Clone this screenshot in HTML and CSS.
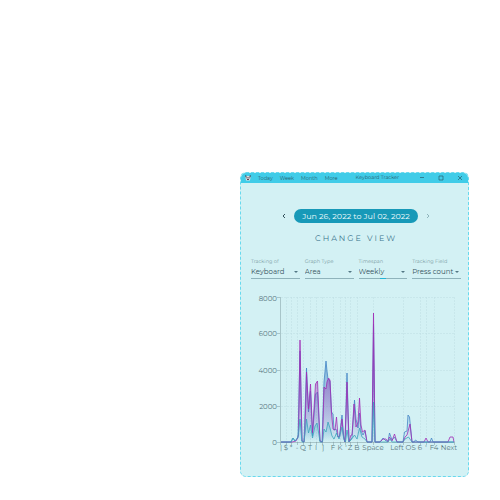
FILE: index.html
```html
<!DOCTYPE html>
<html lang="en">

<head>
    <meta charset="UTF-8">
    <meta name="viewport" content="width=device-width, initial-scale=1.0">
    <title>Keyboard Tracker</title>
    <link rel="stylesheet" href="styles.css">
</head>

<body>
    <div class="window">
        <header class="titlebar">
            <svg class="app-icon" viewBox="0 0 12 12" aria-hidden="true">
                <path d="M1 1l3 1h4l3-1v4l-1 6H2L1 5z" fill="#d9dde2" />
                <path d="M0 0l4 2-3 3zM12 0L8 2l3 3z" fill="#35586b" />
                <path d="M3 4h2v3H3zM7 4h2v3H7zM4 8h4v2H4z" fill="#5a4653" />
            </svg>
            <nav class="menu">
                <button type="button">Today</button>
                <button type="button">Week</button>
                <button type="button">Month</button>
                <button type="button">More</button>
            </nav>
            <span class="title">Keyboard Tracker</span>
            <div class="window-buttons">
                <button type="button" aria-label="Minimize"><svg viewBox="0 0 6 6"><path d="M1 2.500h4" /></svg></button>
                <button type="button" aria-label="Maximize"><svg viewBox="0 0 6 6"><path d="M1 1h4v4H1z" /></svg></button>
                <button type="button" aria-label="Close"><svg viewBox="0 0 6 6"><path d="M1 1l4 4M5 1L1 5" /></svg></button>
            </div>
        </header>

        <main>
            <div class="date-nav">
                <button type="button" class="arrow" aria-label="Previous"><svg viewBox="0 0 6 6"><path d="M4 1L2 3l2 2" /></svg></button>
                <button type="button" class="date-range">Jun 26, 2022 to Jul 02, 2022</button>
                <button type="button" class="arrow next" aria-label="Next"><svg viewBox="0 0 6 6"><path d="M2 1l2 2-2 2" /></svg></button>
            </div>

            <h1>CHANGE VIEW</h1>

            <form class="filters">
                <div class="field">
                    <label for="tracking">Tracking of</label>
                    <select id="tracking"><option>Keyboard</option></select>
                </div>
                <div class="field">
                    <label for="graph">Graph Type</label>
                    <select id="graph"><option>Area</option></select>
                </div>
                <div class="field active">
                    <label for="timespan">Timespan</label>
                    <select id="timespan"><option>Weekly</option></select>
                </div>
                <div class="field">
                    <label for="tracked">Tracking Field</label>
                    <select id="tracked"><option>Press count</option></select>
                </div>
            </form>

            <svg class="chart" viewBox="0 0 210 166" role="img" aria-label="Press count by key">
                <defs>
                    <linearGradient id="blue" x1="0" y1="0" x2="0" y2="1">
                        <stop offset="0" stop-color="#3f7fc4" stop-opacity=".8" />
                        <stop offset="1" stop-color="#3f7fc4" stop-opacity="0" />
                    </linearGradient>
                    <linearGradient id="purple" x1="0" y1="0" x2="0" y2="1">
                        <stop offset="0" stop-color="#9c27b0" stop-opacity=".8" />
                        <stop offset="1" stop-color="#9c27b0" stop-opacity="0" />
                    </linearGradient>
                    <linearGradient id="teal" x1="0" y1="0" x2="0" y2="1">
                        <stop offset="0" stop-color="#28b0c4" stop-opacity=".6" />
                        <stop offset="1" stop-color="#28b0c4" stop-opacity="0" />
                    </linearGradient>
                </defs>

                <path class="grid" d="M30 7.500H203M30 43.500H203M30 80.500H203M30 116.500H203" />
                <path class="grid" d="M35.500 7V152M40.500 7V152M46.500 7V152M52.500 7V152M59.500 7V152M65.500 7V152M71.500 7V152M82.500 7V152M89.500 7V152M94.500 7V152M99.500 7V152M106.500 7V152M122.500 7V152M152.500 7V152M169.500 7V152M175.500 7V152M183.500 7V152M203.500 7V152" />

                <path class="axis" d="M29.500 7V152.500H203.500M26 7.500h3M26 43.500h3M26 80.500h3M26 116.500h3M26 152.500h3" />
                <path class="axis" d="M29.500 152v3M35.500 152v3M40.500 152v3M46.500 152v3M52.500 152v3M59.500 152v3M65.500 152v3M71.500 152v3M82.500 152v3M89.500 152v3M94.500 152v3M99.500 152v3M106.500 152v3M122.500 152v3M152.500 152v3M169.500 152v3M175.500 152v3M183.500 152v3M203.500 152v3" />

                <path class="blue" d="M30 152L40 152L42 148L44 151L47 148L49 61L51 151L53 152L55.500 78L57.500 122L59.500 101L61.500 146L64.500 104L66.500 102L69 151L71 152L73 92L75 71L76 81L77 89L79 91L80.500 122L82 124L83 140L85 139L87 147L88.500 146L91 125L92.500 145L94 152L96 83L98 152L100 149L101 148L103.500 110L105 129L107 138L108.500 123L110 141L112 145L114 141L116 152L121 152L122.500 34L124 152L129 152L132 148L135 151L137 151L138.500 143L141 150L143.500 147L146 152L152 152L153.500 142L156 141L157 125L158.500 127L161 152L163 152L164.500 150L167 152L179 152L180.500 148L182 152L203 152" />
                <path class="purple" d="M30 152L41 152L45 151L46 149L47.500 145L49 50L51 151L53 152L54 140L55.500 82L57.500 119L59.500 94L61.500 143L64.500 94L66.500 91L69 151L71.500 152L73 97L75 99L76 92L77.500 88L79 90L80.500 123L82 139L84 140L85.500 127L87 147L88.500 147L91 129L92.500 147L94 152L96 92L98 152L100 145L101 145L103 114L105 137L107 132L108.500 108L110 135L111.500 142L114 140L116 152L121 152L122.500 23L124 152L129 152L132 149L135 149L137 152L138.500 147L141 151L143.500 144L146 152L152 152L154 147L156 145L159 134L161 152L173 152L175 148L177 152L197 152L199 147L202 147L203 152" />
                <path class="teal" d="M30 152L40 152L42 148L44 151L47 147L49 129L51 152L53 152L55.500 129L57.500 143L59.500 135L61.500 148L64 136L66 133L68 145L69 152L71.500 152L73 139L75 142L77 132L79 138L81 146L83 149L85.500 143L88 149L91 137L93 150L94.500 152L96 140L98 152L100 150L103.500 145L106 149L108.500 138L111 147L114 149L116 152L121 152L122.500 112L124 152L137 152L139 149L141 152L152 152L154 149L157.500 147L161 152L203 152" />

                <g class="y-labels">
                    <text x="26" y="11">8000</text>
                    <text x="26" y="46">6000</text>
                    <text x="26" y="83">4000</text>
                    <text x="26" y="119">2000</text>
                    <text x="26" y="155">0</text>
                </g>
                <g class="x-labels">
                    <text x="30" y="160">|</text>
                    <text x="35" y="160">$</text>
                    <text x="40" y="160">*</text>
                    <text x="46" y="160">-</text>
                    <text x="52" y="160">Q</text>
                    <text x="59" y="160">T</text>
                    <text x="65" y="160">I</text>
                    <text x="72" y="160">]</text>
                    <text x="82" y="160">F</text>
                    <text x="89" y="160">K</text>
                    <text x="95" y="160">'</text>
                    <text x="99" y="160">Z</text>
                    <text x="106" y="160">B</text>
                    <text x="122" y="160">Space</text>
                    <text x="152" y="160">Left OS</text>
                    <text x="169" y="160">6</text>
                    <text x="175" y="160">'</text>
                    <text x="183" y="160">F4</text>
                    <text x="198" y="160">Next</text>
                </g>
            </svg>
        </main>
    </div>
</body>

</html>
```
FILE: styles.css
```css
* {
    box-sizing: border-box;
}

body {
    margin: 0;
    padding: 172px 31px 22px 48%;
    background-color: #fff;
    font-family: "Montserrat", "Inter", sans-serif;
    color: #34525c;
    text-rendering: geometricPrecision;
}

button {
    padding: 0;
    border: none;
    background: none;
    font-family: inherit;
    color: inherit;
    cursor: pointer;
}

button svg {
    display: block;
    width: 6px;
    height: 6px;
    fill: none;
    stroke: currentColor;
    stroke-width: 1;
}

.window {
    border: 1px dashed #68d9ee;
    border-radius: 6px;
    background-color: #d3f1f4;
    overflow: hidden;
}

.titlebar {
    display: flex;
    align-items: center;
    height: 10px;
    padding: 0 5px 0 4px;
    background-color: #40cce8;
    color: #285f70;
    font-size: 5px;
}

.app-icon {
    width: 6px;
    height: 6px;
    margin-right: 7px;
}

.menu {
    display: flex;
    gap: 7px;
}

.menu button {
    font-size: 5px;
    line-height: 10px;
}

.title {
    margin-left: 18px;
}

.window-buttons {
    display: flex;
    gap: 13px;
    margin-left: auto;
}

.window-buttons svg {
    stroke-width: 0.7px;
}

main {
    padding: 26px 7px 20px 10px;
}

.date-nav {
    display: flex;
    align-items: center;
    justify-content: center;
    gap: 7px;
}

.date-range {
    height: 14px;
    padding: 0 8px;
    border-radius: 7px;
    background-color: #1799b8;
    color: #f0fcfd;
    font-size: 8px;
    line-height: 14px;
    white-space: nowrap;
}

.next {
    color: #8fb5bc;
}

h1 {
    margin: 10px 0 14px;
    color: #3b758e;
    font-size: 8px;
    font-weight: 400;
    line-height: 12px;
    letter-spacing: 2px;
    text-align: center;
}

.filters {
    display: grid;
    grid-template-columns: repeat(4, 1fr);
    gap: 5px;
}

.field {
    position: relative;
    min-width: 0;
    border-bottom: 1px solid #8fb3bb;
}

.field label {
    display: block;
    color: #7c9da5;
    font-size: 5px;
    line-height: 7px;
    white-space: nowrap;
}

.field select {
    display: block;
    width: 100%;
    height: 12px;
    padding: 0;
    border: none;
    background: none;
    appearance: none;
    color: #34525c;
    font-family: inherit;
    font-size: 7px;
    line-height: 12px;
}

/* drop-down arrow */
.field::after {
    content: "";
    position: absolute;
    right: 2px;
    bottom: 5px;
    border: 2px solid transparent;
    border-top-color: #527783;
    border-bottom: none;
    pointer-events: none;
}

.active {
    border-image: linear-gradient(90deg, #8fb3bb 45%, #22b5d5 45%, #22b5d5 56%, #8fb3bb 56%) 1;
}

.chart {
    display: block;
    width: 100%;
    margin-top: 11px;
}

.grid {
    fill: none;
    stroke: #bddde2;
    stroke-width: 0.5px;
    stroke-dasharray: 2 1;
}

.axis {
    fill: none;
    stroke: #7d999f;
    stroke-width: 0.5px;
}

.blue,
.purple,
.teal {
    stroke-width: 0.8px;
}

.blue {
    fill: url(#blue);
    stroke: #4385c5;
}

.purple {
    fill: url(#purple);
    stroke: #9f2cb5;
}

.teal {
    fill: url(#teal);
    stroke: #3ca5bd;
}

.y-labels,
.x-labels {
    fill: #597780;
    font-size: 7px;
    text-anchor: middle;
}

.y-labels {
    text-anchor: end;
}
```
